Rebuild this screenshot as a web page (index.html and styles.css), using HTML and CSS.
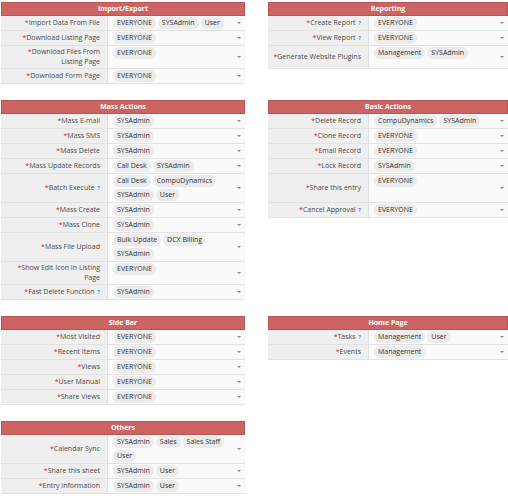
FILE: index.html
```html
<!DOCTYPE html>
<html lang="en">
<head>
    <meta charset="UTF-8">
    <meta name="viewport" content="width=device-width, initial-scale=1.0">
    <title>Module Permissions</title>
    <link rel="stylesheet" href="styles.css">
</head>
<body>
    <div class="page">

        <!-- Import/Export -->
        <div class="panel">
            <div class="panel-title">Import/Export</div>
            <div class="row">
                <div class="label"><span><i>*</i>Import Data From File</span></div>
                <div class="value"><div class="tags"><span class="tag">EVERYONE</span><span class="tag">SYSAdmin</span><span class="tag">User</span></div><span class="caret"></span></div>
            </div>
            <div class="row">
                <div class="label"><span><i>*</i>Download Listing Page</span></div>
                <div class="value"><div class="tags"><span class="tag">EVERYONE</span></div><span class="caret"></span></div>
            </div>
            <div class="row">
                <div class="label"><span><i>*</i>Download Files From Listing Page</span></div>
                <div class="value"><div class="tags"><span class="tag">EVERYONE</span></div><span class="caret"></span></div>
            </div>
            <div class="row">
                <div class="label"><span><i>*</i>Download Form Page</span></div>
                <div class="value"><div class="tags"><span class="tag">EVERYONE</span></div><span class="caret"></span></div>
            </div>
        </div>

        <!-- Reporting -->
        <div class="panel narrow">
            <div class="panel-title">Reporting</div>
            <div class="row">
                <div class="label"><span><i>*</i>Create Report<b class="help">?</b></span></div>
                <div class="value"><div class="tags"><span class="tag">EVERYONE</span></div><span class="caret"></span></div>
            </div>
            <div class="row">
                <div class="label"><span><i>*</i>View Report<b class="help">?</b></span></div>
                <div class="value"><div class="tags"><span class="tag">EVERYONE</span></div><span class="caret"></span></div>
            </div>
            <div class="row mid">
                <div class="label"><span><i>*</i>Generate Website Plugins</span></div>
                <div class="value"><div class="tags"><span class="tag">Management</span><span class="tag">SYSAdmin</span></div><span class="caret"></span></div>
            </div>
        </div>

        <!-- Mass Actions -->
        <div class="panel">
            <div class="panel-title">Mass Actions</div>
            <div class="row">
                <div class="label"><span><i>*</i>Mass E-mail</span></div>
                <div class="value"><div class="tags"><span class="tag">SYSAdmin</span></div><span class="caret"></span></div>
            </div>
            <div class="row">
                <div class="label"><span><i>*</i>Mass SMS</span></div>
                <div class="value"><div class="tags"><span class="tag">SYSAdmin</span></div><span class="caret"></span></div>
            </div>
            <div class="row">
                <div class="label"><span><i>*</i>Mass Delete</span></div>
                <div class="value"><div class="tags"><span class="tag">SYSAdmin</span></div><span class="caret"></span></div>
            </div>
            <div class="row">
                <div class="label"><span><i>*</i>Mass Update Records</span></div>
                <div class="value"><div class="tags"><span class="tag">Call Desk</span><span class="tag">SYSAdmin</span></div><span class="caret"></span></div>
            </div>
            <div class="row">
                <div class="label"><span><i>*</i>Batch Execute<b class="help">?</b></span></div>
                <div class="value"><div class="tags"><span class="tag">Call Desk</span><span class="tag">CompuDynamics</span><span class="tag">SYSAdmin</span><span class="tag">User</span></div><span class="caret"></span></div>
            </div>
            <div class="row">
                <div class="label"><span><i>*</i>Mass Create</span></div>
                <div class="value"><div class="tags"><span class="tag">SYSAdmin</span></div><span class="caret"></span></div>
            </div>
            <div class="row">
                <div class="label"><span><i>*</i>Mass Clone</span></div>
                <div class="value"><div class="tags"><span class="tag">SYSAdmin</span></div><span class="caret"></span></div>
            </div>
            <div class="row">
                <div class="label"><span><i>*</i>Mass File Upload</span></div>
                <div class="value"><div class="tags"><span class="tag">Bulk Update</span><span class="tag">DCX Billing</span><span class="tag">SYSAdmin</span></div><span class="caret"></span></div>
            </div>
            <div class="row">
                <div class="label"><span><i>*</i>Show Edit Icon In Listing Page</span></div>
                <div class="value"><div class="tags"><span class="tag">EVERYONE</span></div><span class="caret"></span></div>
            </div>
            <div class="row">
                <div class="label"><span><i>*</i>Fast Delete Function<b class="help">?</b></span></div>
                <div class="value"><div class="tags"><span class="tag">SYSAdmin</span></div><span class="caret"></span></div>
            </div>
        </div>

        <!-- Basic Actions -->
        <div class="panel narrow">
            <div class="panel-title">Basic Actions</div>
            <div class="row">
                <div class="label"><span><i>*</i>Delete Record</span></div>
                <div class="value"><div class="tags"><span class="tag">CompuDynamics</span><span class="tag">SYSAdmin</span></div><span class="caret"></span></div>
            </div>
            <div class="row">
                <div class="label"><span><i>*</i>Clone Record</span></div>
                <div class="value"><div class="tags"><span class="tag">EVERYONE</span></div><span class="caret"></span></div>
            </div>
            <div class="row">
                <div class="label"><span><i>*</i>Email Record</span></div>
                <div class="value"><div class="tags"><span class="tag">EVERYONE</span></div><span class="caret"></span></div>
            </div>
            <div class="row">
                <div class="label"><span><i>*</i>Lock Record</span></div>
                <div class="value"><div class="tags"><span class="tag">SYSAdmin</span></div><span class="caret"></span></div>
            </div>
            <div class="row tall">
                <div class="label"><span><i>*</i>Share this entry</span></div>
                <div class="value"><div class="tags"><span class="tag">EVERYONE</span></div><span class="caret"></span></div>
            </div>
            <div class="row">
                <div class="label"><span><i>*</i>Cancel Approval<b class="help">?</b></span></div>
                <div class="value"><div class="tags"><span class="tag">EVERYONE</span></div><span class="caret"></span></div>
            </div>
        </div>

        <!-- Side Bar -->
        <div class="panel">
            <div class="panel-title">Side Bar</div>
            <div class="row">
                <div class="label"><span><i>*</i>Most Visited</span></div>
                <div class="value"><div class="tags"><span class="tag">EVERYONE</span></div><span class="caret"></span></div>
            </div>
            <div class="row">
                <div class="label"><span><i>*</i>Recent Items</span></div>
                <div class="value"><div class="tags"><span class="tag">EVERYONE</span></div><span class="caret"></span></div>
            </div>
            <div class="row">
                <div class="label"><span><i>*</i>Views</span></div>
                <div class="value"><div class="tags"><span class="tag">EVERYONE</span></div><span class="caret"></span></div>
            </div>
            <div class="row">
                <div class="label"><span><i>*</i>User Manual</span></div>
                <div class="value"><div class="tags"><span class="tag">EVERYONE</span></div><span class="caret"></span></div>
            </div>
            <div class="row">
                <div class="label"><span><i>*</i>Share Views</span></div>
                <div class="value"><div class="tags"><span class="tag">EVERYONE</span></div><span class="caret"></span></div>
            </div>
        </div>

        <!-- Home Page -->
        <div class="panel narrow">
            <div class="panel-title">Home Page</div>
            <div class="row">
                <div class="label"><span><i>*</i>Tasks<b class="help">?</b></span></div>
                <div class="value"><div class="tags"><span class="tag">Management</span><span class="tag">User</span></div><span class="caret"></span></div>
            </div>
            <div class="row">
                <div class="label"><span><i>*</i>Events</span></div>
                <div class="value"><div class="tags"><span class="tag">Management</span></div><span class="caret"></span></div>
            </div>
        </div>

        <!-- Others -->
        <div class="panel">
            <div class="panel-title">Others</div>
            <div class="row">
                <div class="label"><span><i>*</i>Calendar Sync</span></div>
                <div class="value"><div class="tags"><span class="tag">SYSAdmin</span><span class="tag">Sales</span><span class="tag">Sales Staff</span><span class="tag">User</span></div><span class="caret"></span></div>
            </div>
            <div class="row">
                <div class="label"><span><i>*</i>Share this sheet</span></div>
                <div class="value"><div class="tags"><span class="tag">SYSAdmin</span><span class="tag">User</span></div><span class="caret"></span></div>
            </div>
            <div class="row">
                <div class="label"><span><i>*</i>Entry information</span></div>
                <div class="value"><div class="tags"><span class="tag">SYSAdmin</span><span class="tag">User</span></div><span class="caret"></span></div>
            </div>
        </div>

    </div>
</body>
</html>
```

FILE: styles.css
```css
body {
	margin: 0;
	background: #fff;
	font-family: "Open Sans", sans-serif;
	font-size: 7px;
	color: #4a4a4a;
}

.page {
	display: grid;
	grid-template-columns: 244px 240px;
	column-gap: 23px;
	row-gap: 16px;
	align-items: start;
	padding: 2px 0 0 1px;
}

.panel-title {
	background: #cd6464;
	border: 1px solid #b95454;
	color: #fff;
	font-weight: 700;
	text-align: center;
	line-height: 12px;
}

.row {
	display: flex;
	border-bottom: 1px solid #e2e2e2;
}

.row.mid {
	min-height: 22px;
}

.row.tall {
	min-height: 28px;
}

.label {
	width: 107px;
	box-sizing: border-box;
	padding: 1px 7px 1px 10px;
	background: #efefef;
	border-right: 1px solid #dedede;
	display: flex;
	align-items: center;
	justify-content: flex-end;
	text-align: right;
	line-height: 10px;
}

.narrow .label {
	width: 101px;
	padding-left: 4px;
}

.label i {
	font-style: normal;
	color: #e02424;
}

.help {
	color: #3d8ee0;
	font-size: 5px;
	margin-left: 3px;
}

.value {
	flex: 1;
	display: flex;
	align-items: center;
	padding: 1px 4px 1px 5px;
	background: #fafafa;
}

.tags {
	flex: 1;
	align-self: flex-start;
	display: flex;
	flex-wrap: wrap;
	gap: 2px;
}

.tag {
	background: #ebebeb;
	border-radius: 6px;
	padding: 0 4px;
	line-height: 12px;
	color: #333;
}

.caret {
	width: 0;
	height: 0;
	border-left: 2px solid transparent;
	border-right: 2px solid transparent;
	border-top: 2px solid #8a8a8a;
}
```
